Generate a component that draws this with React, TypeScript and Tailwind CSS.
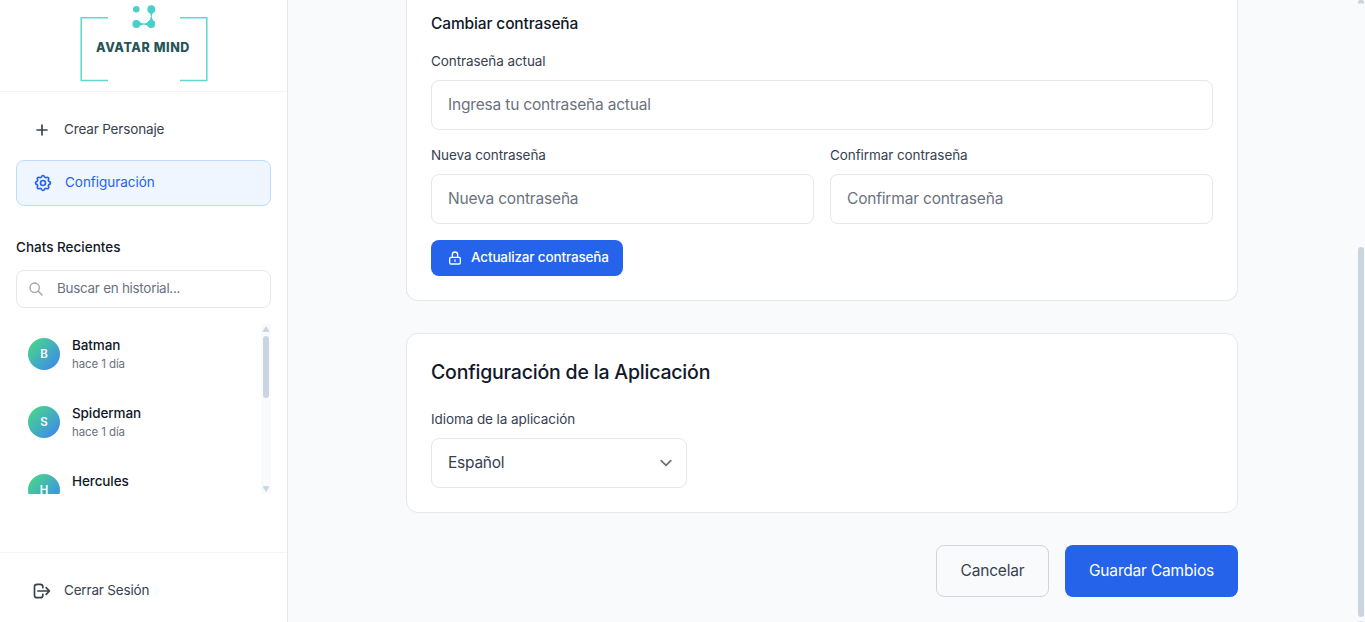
import type { ReactNode } from "react";

const iconPaths = {
  plus: ["M12 6v6m0 0v6m0-6h6m-6 0H6"],
  cog: [
    "M10.325 4.317c.426-1.756 2.924-1.756 3.35 0a1.724 1.724 0 002.573 1.066c1.543-.94 3.31.826 2.37 2.37a1.724 1.724 0 001.065 2.572c1.756.426 1.756 2.924 0 3.35a1.724 1.724 0 00-1.066 2.573c.94 1.543-.826 3.31-2.37 2.37a1.724 1.724 0 00-2.572 1.065c-.426 1.756-2.924 1.756-3.35 0a1.724 1.724 0 00-2.573-1.066c-1.543.94-3.31-.826-2.37-2.37a1.724 1.724 0 00-1.065-2.572c-1.756-.426-1.756-2.924 0-3.35a1.724 1.724 0 001.066-2.573c-.94-1.543.826-3.31 2.37-2.37.996.608 2.296.07 2.572-1.065z",
    "M15 12a3 3 0 11-6 0 3 3 0 016 0z",
  ],
  search: ["M21 21l-6-6m2-5a7 7 0 11-14 0 7 7 0 0114 0z"],
  logout: ["M17 16l4-4m0 0l-4-4m4 4H7m6 4v1a3 3 0 01-3 3H6a3 3 0 01-3-3V7a3 3 0 013-3h4a3 3 0 013 3v1"],
  lock: ["M12 15v2m-6 4h12a2 2 0 002-2v-6a2 2 0 00-2-2H6a2 2 0 00-2 2v6a2 2 0 002 2zm10-10V7a4 4 0 00-8 0v4h8z"],
};

function Icon({ name, className }: { name: keyof typeof iconPaths; className: string }) {
  return (
    <svg className={`shrink-0 ${className}`} viewBox="0 0 24 24" fill="none" stroke="currentColor" strokeWidth={2} strokeLinecap="round" strokeLinejoin="round">
      {iconPaths[name].map((d) => (
        <path key={d} d={d} />
      ))}
    </svg>
  );
}

function Logo() {
  return (
    <div className="flex h-[92px] shrink-0 justify-center border-b border-[#f3f4f6]">
      <div className="grid h-[91px] w-[128px]">
        <svg className="col-start-1 row-start-1" width="128" height="91" viewBox="0 0 128 91" fill="none">
          <path d="M28 17.8H1.2V80.5H28M100 17.8H126.8V80.5H100" stroke="#5fd9cf" strokeWidth="1.5" />
          <g fill="#48d1c8">
            <circle cx="56.3" cy="9.2" r="3.3" />
            <circle cx="71.3" cy="9.2" r="3.9" />
            <circle cx="56.3" cy="24" r="3.9" />
            <circle cx="71.3" cy="24" r="3.9" />
            <path d="M67.6 10.5Q70.6 13.5 70.9 16.6Q70.6 19.7 67.6 22.7H75Q72 19.7 71.7 16.6Q72 13.5 75 10.5Z" />
            <path d="M57.6 20.3Q60.6 23.3 63.8 23.6Q67 23.3 70 20.3V27.7Q67 24.7 63.8 24.4Q60.6 24.7 57.6 27.7Z" />
          </g>
        </svg>
        <span className="col-start-1 row-start-1 self-start pt-[40px] pr-[1px] text-center text-[12.5px] leading-4 font-extrabold tracking-[0.58px] whitespace-nowrap text-[#265558]">AVATAR MIND</span>
      </div>
    </div>
  );
}

function Avatar({ letter }: { letter: string }) {
  return (
    <div className="flex size-8 shrink-0 items-center justify-center rounded-full bg-linear-to-br/srgb from-[#4ade80] to-[#3b82f6] pt-px text-[11.5px] font-semibold text-white">
      {letter}
    </div>
  );
}

const chats = ["Batman", "Spiderman", "Hercules"];

function Sidebar() {
  return (
    <aside className="flex w-72 shrink-0 flex-col border-r border-[#e5e7eb] bg-white">
      <Logo />
      <nav className="flex flex-col gap-2 px-4 pt-4">
        <a className="flex h-11 items-center gap-3 px-4 text-[13.5px] tracking-[-0.16px] text-[#374151]">
          <Icon name="plus" className="size-5" />
          <span className="pb-[2px]">Crear Personaje</span>
        </a>
        <a className="flex h-[46px] items-center gap-3 rounded-lg border border-[#bfdbfe] bg-[#eff6ff] px-4 text-[13.5px] tracking-[-0.03px] text-[#2563eb]">
          <Icon name="cog" className="size-5" />
          <span className="pb-px">Configuración</span>
        </a>
      </nav>
      <section className="flex flex-col px-4 pt-[31px]">
        <h3 className="h-5 text-[13.5px] leading-5 font-[450] tracking-[0px] text-[#111827]">Chats Recientes</h3>
        <div className="mt-[13px] flex h-[38px] items-center gap-[13px] rounded-lg border border-[#e5e7eb] px-[11px]">
          <Icon name="search" className="size-4 text-[#9ca3af]" />
          <span className="pb-px text-[13.5px] tracking-[-0.3px] text-[#6b7280]">Buscar en historial...</span>
        </div>
        <div className="mt-4 flex h-[170px] overflow-hidden">
          <div className="flex flex-1 flex-col gap-1">
            {chats.map((name) => (
              <div key={name} className="flex h-16 shrink-0 items-center gap-3 px-3 pb-[4px]">
                <Avatar letter={name[0]} />
                <div>
                  <p className="text-[13.5px] leading-5 font-[450] tracking-[-0.1px] text-[#111827]">{name}</p>
                  <p className="text-[11.5px] leading-[18px] tracking-[-0.1px] text-[#6b7280]">hace 1 día</p>
                </div>
              </div>
            ))}
          </div>
          <div className="flex w-[10px] flex-col items-center bg-[#f8fafc] pt-[2px] pb-[2px]">
            <svg width="8" height="6" viewBox="0 0 8 6"><path d="M4 0.5L7 5.5H1Z" fill="#cbd5e1" stroke="#cbd5e1" strokeWidth="0.8" strokeLinejoin="round" /></svg>
            <div className="mt-1 h-[62px] w-[6px] rounded-full bg-[#cbd5e1]" />
            <svg className="mt-auto" width="8" height="6" viewBox="0 0 8 6"><path d="M4 5.5L7 0.5H1Z" fill="#cbd5e1" stroke="#cbd5e1" strokeWidth="0.8" strokeLinejoin="round" /></svg>
          </div>
        </div>
      </section>
      <div className="mt-auto flex h-[70px] items-center gap-3 border-t border-[#f3f4f6] px-8 pt-[6px] text-[13.5px] tracking-[-0.18px] text-[#374151]">
        <Icon name="logout" className="size-5" />
        <span>Cerrar Sesión</span>
      </div>
    </aside>
  );
}

function Field({ label, children }: { label: string; children: ReactNode }) {
  return (
    <div className="flex flex-col gap-[9px]">
      <label className="h-5 text-[13.5px] leading-5 tracking-[-0.08px] text-[#374151]">{label}</label>
      {children}
    </div>
  );
}

function TextBox({ text }: { text: string }) {
  return (
    <div className="flex h-[50px] items-center rounded-lg border border-[#e5e7eb] bg-white px-4 pb-px text-[15.5px] tracking-[-0.18px] text-[#6b7280]">{text}</div>
  );
}

export default function App() {
  return (
    <div className="flex h-[622px] w-[1365px] overflow-hidden bg-[#f9fafb] font-['Inter','Liberation_Sans',sans-serif]">
      <Sidebar />
      <main className="flex min-w-0 flex-1 flex-col pl-[118px]">
        <section className="flex h-[301px] w-[832px] flex-col rounded-b-xl border border-t-0 border-[#e5e7eb] bg-white px-6 pt-3">
          <h3 className="h-6 text-[15.5px] leading-6 font-[450] tracking-[-0.13px] text-[#111827]">Cambiar contraseña</h3>
          <div className="mt-[15px] flex flex-col">
            <Field label="Contraseña actual">
              <TextBox text="Ingresa tu contraseña actual" />
            </Field>
            <div className="mt-[15px] grid grid-cols-2 gap-4">
              <Field label="Nueva contraseña">
                <TextBox text="Nueva contraseña" />
              </Field>
              <Field label="Confirmar contraseña">
                <TextBox text="Confirmar contraseña" />
              </Field>
            </div>
            <button className="mt-4 flex h-9 w-48 items-center gap-2 rounded-lg bg-[#2563eb] px-4 text-[13.5px] font-[450] tracking-[-0.15px] whitespace-nowrap text-white">
              <Icon name="lock" className="size-4" />
              <span className="pb-px">Actualizar contraseña</span>
            </button>
          </div>
        </section>
        <section className="mt-8 flex h-[180px] w-[832px] flex-col rounded-xl border border-[#e5e7eb] bg-white px-6 pt-6">
          <h2 className="h-7 text-[19.5px] leading-7 font-[550] tracking-[-0.2px] text-[#111827]">Configuración de la Aplicación</h2>
          <div className="mt-[23px] w-64">
            <Field label="Idioma de la aplicación">
              <div className="flex h-[50px] items-center justify-between rounded-lg border border-[#e5e7eb] bg-white pr-2 pl-4 text-[15.5px] tracking-[-0.25px] text-[#374151]">
                <span>Español</span>
                <svg className="size-6" viewBox="0 0 20 20" fill="none" stroke="#6b7280" strokeWidth="1.5" strokeLinecap="round" strokeLinejoin="round">
                  <path d="M6 8l4 4 4-4" />
                </svg>
              </div>
            </Field>
          </div>
        </section>
        <div className="mt-8 flex w-[832px] justify-end gap-4">
          <button className="flex h-[52px] w-[113px] items-center justify-center rounded-lg border border-[#d1d5db] text-[15.5px] tracking-[-0.2px] text-[#374151]">Cancelar</button>
          <button className="flex h-[52px] w-[173px] items-center justify-center rounded-lg bg-[#2563eb] text-[15.5px] tracking-[-0.18px] text-white">Guardar Cambios</button>
        </div>
      </main>
      <div className="flex w-[7px] shrink-0 flex-col justify-between">
        <svg width="6" height="4" viewBox="0 0 6 4"><path d="M1 0H5V1H6V3.5H0V1H1Z" fill="#cbd5e1" /></svg>
        <div className="mt-[243px] h-[370px] w-[6px] shrink-0 rounded-full bg-[#cbd5e1]" />
        <div className="mt-auto h-px w-[6px] bg-[#e2e8f0]" />
      </div>
    </div>
  );
}
